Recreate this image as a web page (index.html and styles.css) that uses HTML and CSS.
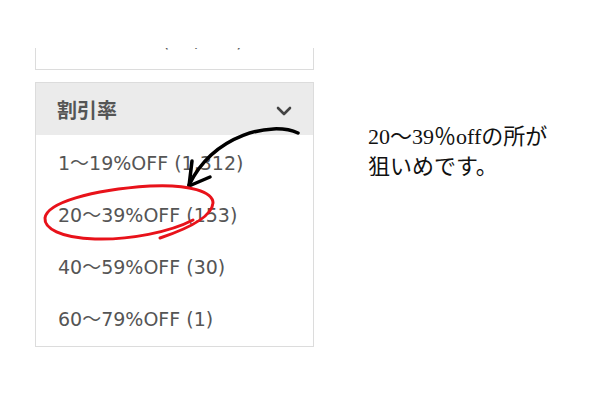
FILE: index.html
```html
<!DOCTYPE html>
<html lang="ja">
<head>
    <meta charset="UTF-8">
    <meta name="viewport" content="width=device-width, initial-scale=1.0">
    <title>割引率</title>
    <link rel="stylesheet" href="styles.css">
</head>
<body>
    <div class="page">
        <div class="sidebar">
            <div class="clip">
                <div class="card card-top">
                    <ul class="filter-list">
                        <li>1～9%OFF (12,345)</li>
                    </ul>
                </div>
            </div>

            <div class="card">
                <div class="card-head">
                    <span>割引率</span>
                    <svg class="chevron" width="16" height="10" viewBox="0 0 16 10">
                        <path d="M2 2 L8 8 L14 2" fill="none" stroke="#444" stroke-width="2.6" stroke-linecap="round" stroke-linejoin="round"/>
                    </svg>
                </div>
                <ul class="filter-list">
                    <li>1～19%OFF (1,312)</li>
                    <li>20～39%OFF (153)</li>
                    <li>40～59%OFF (30)</li>
                    <li>60～79%OFF (1)</li>
                </ul>
            </div>
        </div>

        <p class="note">20～39％offの所が<br>狙いめです。</p>
    </div>

    <!-- hand drawn annotation over the list -->
    <svg class="marks" width="600" height="400" viewBox="0 0 600 400">
        <path d="M298 133 C272 121 214 134 189 185" fill="none" stroke="#000" stroke-width="3.5" stroke-linecap="round"/>
        <path d="M192 161 L189 186 L210 177" fill="none" stroke="#000" stroke-width="3.5" stroke-linecap="round" stroke-linejoin="round"/>
        <path d="M193 220 C170 232 130 240 95 239 C60 238 44 228 45 218 C47 203 90 190 150 186 C190 184 213 192 213 203 C212 216 190 228 160 238" fill="none" stroke="#e8121a" stroke-width="3" stroke-linecap="round"/>
    </svg>
</body>
</html>
```

FILE: styles.css
```css
body {
    margin: 0;
    background-color: #ffffff;
    font-family: "DejaVu Sans", "Noto Sans CJK JP", sans-serif;
}
.page {
    display: flex;
    align-items: flex-start;
    padding-left: 35px;
}
.sidebar {
    width: 279px;
}
.clip {
    margin-top: 48px;
    height: 22px;
    overflow: hidden;
}
.card {
    border: 1px solid #dcdcdc;
    background-color: #ffffff;
    margin-top: 12px;
}
.card-top {
    margin-top: -37px;
}
.card-top .filter-list {
    padding-bottom: 5px;
}
.card-head {
    display: flex;
    align-items: center;
    justify-content: space-between;
    height: 52px;
    padding: 0 21px 0 21px;
    background-color: #ebebeb;
    color: #555;
    font-family: "Noto Sans CJK JP", sans-serif;
    font-weight: bold;
    font-size: 20px;
}
.chevron {
    margin-top: 3px;
}
.filter-list {
    list-style: none;
    margin: 0;
    padding: 0 0 3px;
}
.filter-list li {
    display: flex;
    align-items: center;
    height: 52px;
    padding-left: 22px;
    color: #555;
    font-size: 19px;
}
.note {
    margin: 122px 0 0 54px;
    font-family: "Liberation Serif", "Noto Sans CJK JP", serif;
    font-size: 22px;
    line-height: 30px;
    color: #111;
}
.marks {
    position: absolute;
    top: 0;
    left: 0;
    pointer-events: none;
}
```
